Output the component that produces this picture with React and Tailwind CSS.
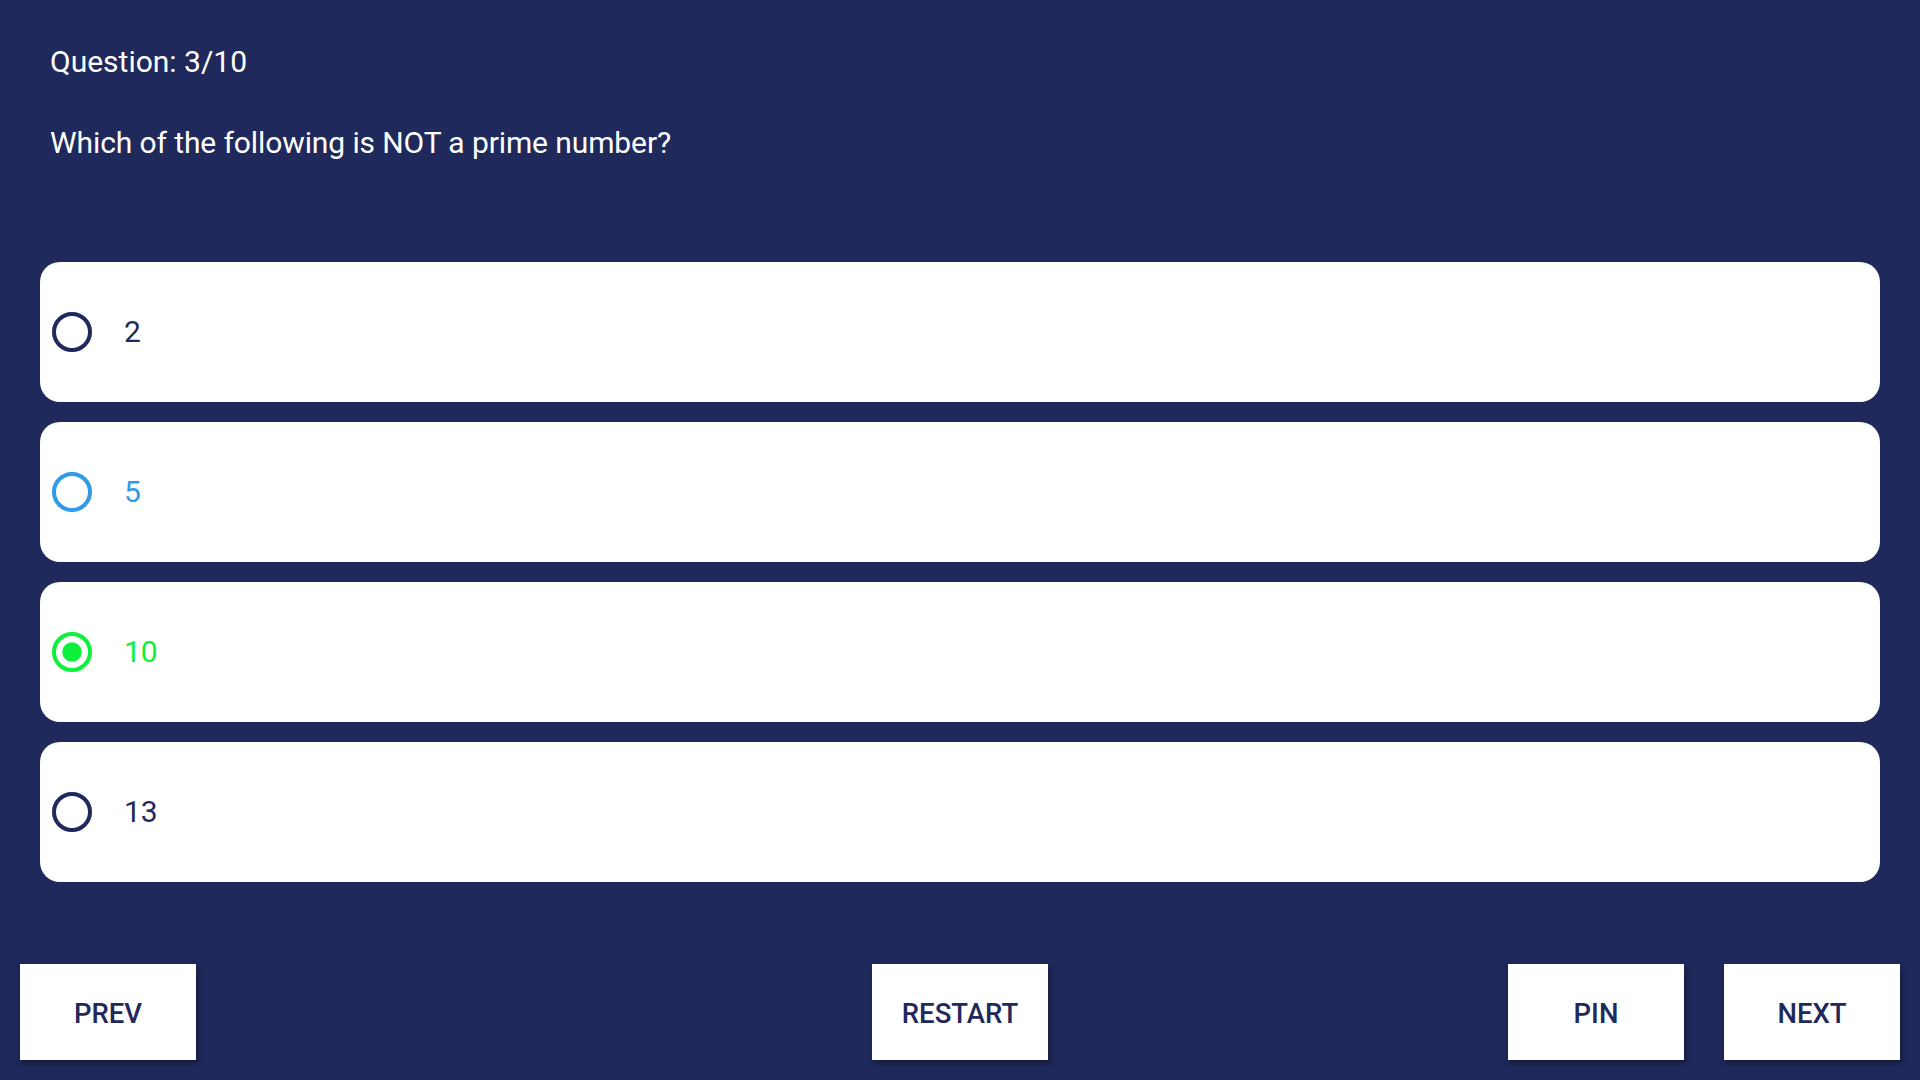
import React, { useState } from "react";

const options = [
  { id: 1, label: "2" },
  { id: 2, label: "5" },
  { id: 3, label: "10" },
  { id: 4, label: "13" },
];

function Radio({ color, checked }) {
  return (
    <svg width="40" height="40" viewBox="0 0 40 40" className="shrink-0">
      <circle cx="20" cy="20" r="18" fill="none" stroke={color} strokeWidth="4" />
      {checked && <circle cx="20" cy="20" r="9.75" fill={color} />}
    </svg>
  );
}

export default function App() {
  const [selected, setSelected] = useState(3);
  const hovered = 2;

  const colorFor = (id) => {
    if (id === selected) return "#0ef03c";
    if (id === hovered) return "#2f9be9";
    return "#1f295b";
  };

  return (
    <div
      className="h-screen w-full bg-[#1f295b] flex flex-col overflow-hidden"
      style={{ fontFamily: "Roboto, 'Noto Sans', sans-serif" }}
    >
      {/* Header */}
      <div className="pt-[47px] px-[50px] text-white">
        <p className="text-[30px] leading-[30px]">Question: 3/10</p>
        <p className="mt-[51px] text-[30px] leading-[30px] tracking-[-0.1px]">
          Which of the following is NOT a prime number?
        </p>
      </div>

      {/* Options */}
      <div className="mt-[104px] px-[40px] flex flex-col gap-[20px]">
        {options.map((o) => (
          <button
            key={o.id}
            onClick={() => setSelected(o.id)}
            className="h-[140px] w-full bg-white rounded-[20px] flex items-center pl-[12px] text-left"
          >
            <Radio color={colorFor(o.id)} checked={o.id === selected} />
            <span
              className="ml-[32px] text-[30px] leading-none"
              style={{ color: colorFor(o.id) }}
            >
              {o.label}
            </span>
          </button>
        ))}
      </div>

      {/* Bottom buttons */}
      <div className="mt-auto pb-[20px] px-[20px] grid grid-cols-3 items-center">
        <div className="flex justify-start">
          <button className="w-[176px] h-[96px] pt-[4px] bg-white text-[#1f295b] text-[27.5px] font-medium shadow-[2px_4px_6px_rgba(0,0,0,0.35)]">
            PREV
          </button>
        </div>
        <div className="flex justify-center">
          <button className="w-[176px] h-[96px] pt-[4px] bg-white text-[#1f295b] text-[27.5px] font-medium shadow-[2px_4px_6px_rgba(0,0,0,0.35)]">
            RESTART
          </button>
        </div>
        <div className="flex justify-end gap-[40px]">
          <button className="w-[176px] h-[96px] pt-[4px] bg-white text-[#1f295b] text-[27.5px] font-medium shadow-[2px_4px_6px_rgba(0,0,0,0.35)]">
            PIN
          </button>
          <button className="w-[176px] h-[96px] pt-[4px] bg-white text-[#1f295b] text-[27.5px] font-medium shadow-[2px_4px_6px_rgba(0,0,0,0.35)]">
            NEXT
          </button>
        </div>
      </div>
    </div>
  );
}
